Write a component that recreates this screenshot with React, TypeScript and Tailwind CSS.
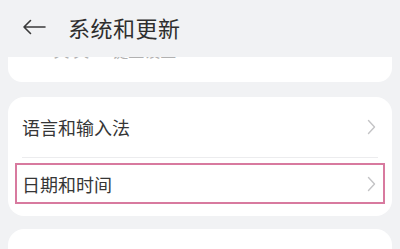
import React from "react";

const font = { fontFamily: '"Noto Sans CJK SC", "Noto Sans", sans-serif' };

function Chevron() {
  return (
    <svg width="9" height="16" viewBox="0 0 9 16" className="shrink-0">
      <path d="M1.5 1.5 L7.5 8 L1.5 14.5" fill="none" stroke="#c4c4c6" strokeWidth="1.4" strokeLinecap="round" strokeLinejoin="round" />
    </svg>
  );
}

export default function App() {
  return (
    <div className="h-[249px] w-[400px] overflow-hidden bg-[#f1f2f4] text-[#363636]" style={font}>
      {/* header */}
      <div className="flex h-[53px] items-center pl-[22px]">
        <svg width="24" height="16" viewBox="0 0 24 16">
          <path d="M23 8 H2 M8.5 1.5 L2 8 L8.5 14.5" fill="none" stroke="#3a3a3a" strokeWidth="1.6" strokeLinecap="round" strokeLinejoin="round" />
        </svg>
        <h1 className="ml-[22px] text-[22px] leading-none tracking-[0.5px] text-[#2e2e2e]">系统和更新</h1>
      </div>

      {/* scrolled card, mostly hidden under the header */}
      <div className="mx-2 mt-1 h-[25px] overflow-hidden rounded-b-[14px] bg-white">
        <div className="mt-[-15px] pl-[26px] text-[16px] leading-4 text-[#666] opacity-50">· 关 关 · 键盘设置 ·</div>
      </div>

      {/* main card */}
      <div className="mx-2 mt-[15px] rounded-[16px] bg-white pb-[12px]">
        <div className="flex h-[60px] items-center justify-between pl-[14px] pr-[16px]">
          <span className="text-[18px] leading-none">语言和输入法</span>
          <Chevron />
        </div>
        <div className="mx-[14px] h-px bg-[#ececee]" />
        <div className="mx-[7px] mt-[5px] flex h-[41px] items-center justify-between border-2 border-[#d87a9f] pl-[5px] pr-[7px]">
          <span className="text-[18px] leading-none">日期和时间</span>
          <Chevron />
        </div>
      </div>

      {/* next card */}
      <div className="mx-2 mt-[13px] h-[40px] rounded-t-[16px] bg-white" />
    </div>
  );
}
